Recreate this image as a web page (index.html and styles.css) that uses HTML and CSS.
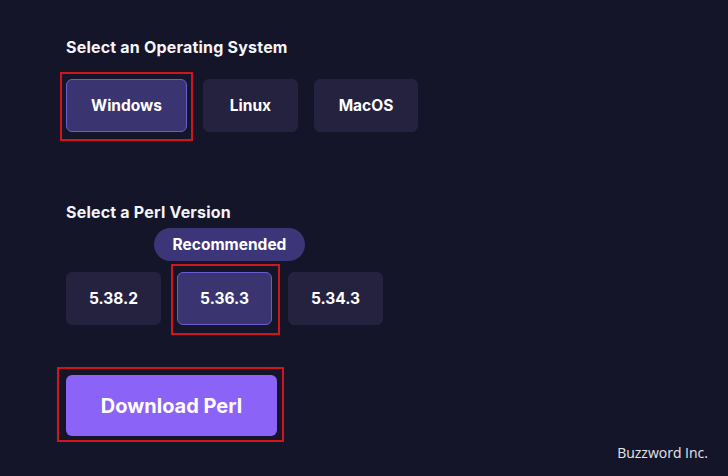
FILE: index.html
```html
<!DOCTYPE html>
<html>
<head>
<meta charset="utf-8">
<link rel="stylesheet" href="styles.css">
</head>
<body>
<main class="page">
  <section class="group os">
    <h2 class="title">Select an Operating System</h2>
    <div class="options">
      <button class="opt opt-os selected marked mark-os">Windows</button>
      <button class="opt opt-os linux">Linux</button>
      <button class="opt opt-os macos">MacOS</button>
    </div>
  </section>
  <section class="group perl">
    <h2 class="title">Select a Perl Version</h2>
    <div class="options versions">
      <button class="opt opt-ver">5.38.2</button>
      <div class="rec-wrap">
        <span class="badge">Recommended</span>
        <button class="opt opt-ver selected marked mark-ver">5.36.3</button>
      </div>
      <button class="opt opt-ver">5.34.3</button>
    </div>
  </section>
  <div class="download-row">
    <button class="download marked mark-dl">Download Perl</button>
  </div>
</main>
<div class="credit">Buzzword Inc.</div>
</body>
</html>
```
FILE: styles.css
```css
* { box-sizing: border-box; }
html, body { margin: 0; height: 100%; }
body {
  background: #15152a;
  font-family: "Inter", "Open Sans", sans-serif;
  color: #fff;
  position: relative;
  overflow: hidden;
}
.page {
  padding: 37px 0 0 66px;
  display: flex;
  flex-direction: column;
}
.title {
  margin: 0;
  font-size: 16px;
  line-height: 20px;
  font-weight: 700;
  letter-spacing: 0.2px;
  color: #f4f4f8;
}
.options {
  display: flex;
  gap: 16px;
  margin-top: 22px;
  align-items: flex-end;
}
.opt {
  font-family: inherit;
  font-weight: 700;
  font-size: 15.5px;
  color: #fff;
  background: #25223f;
  border: 1px solid #25223f;
  border-radius: 6px;
  cursor: pointer;
  padding: 0;
  position: relative;
}
.opt.selected {
  background: #3a3470;
  border-color: #6c5cd0;
}
.opt-os { height: 53px; }
.opt-os.selected { width: 121px; }
.opt-os.linux { width: 95px; }
.opt-os.macos { width: 104px; }
.opt-ver { width: 95px; height: 53px; }
.perl { margin-top: 70px; }
.versions { margin-top: 6px; }
.rec-wrap {
  position: relative;
  padding-top: 44px;
  display: flex;
}
.badge {
  position: absolute;
  top: 0;
  left: -23px;
  width: 151px;
  height: 33px;
  border-radius: 17px;
  background: #3c3578;
  font-size: 15.5px;
  font-weight: 700;
  display: flex;
  align-items: center;
  justify-content: center;
  color: #fff;
}
.download-row { margin-top: 50px; display: flex; }
.download {
  width: 211px;
  height: 61px;
  border: 0;
  border-radius: 6px;
  background: #8c63f7;
  color: #fff;
  font-family: inherit;
  font-weight: 700;
  font-size: 20px;
  position: relative;
  padding: 0;
}
.marked::after {
  content: "";
  position: absolute;
  border: 2px solid #d0161b;
  pointer-events: none;
}
.mark-os::after { left: -7px; right: -7px; top: -8px; bottom: -10px; }
.mark-ver::after { left: -7px; right: -9px; top: -9px; bottom: -11px; }
.mark-dl::after { left: -9px; right: -7px; top: -8px; bottom: -6px; }
.credit {
  position: absolute;
  right: 20px;
  bottom: 14px;
  font-family: "Open Sans", "Noto Sans", sans-serif;
  font-size: 14px;
  color: #e6e6ea;
}
```
